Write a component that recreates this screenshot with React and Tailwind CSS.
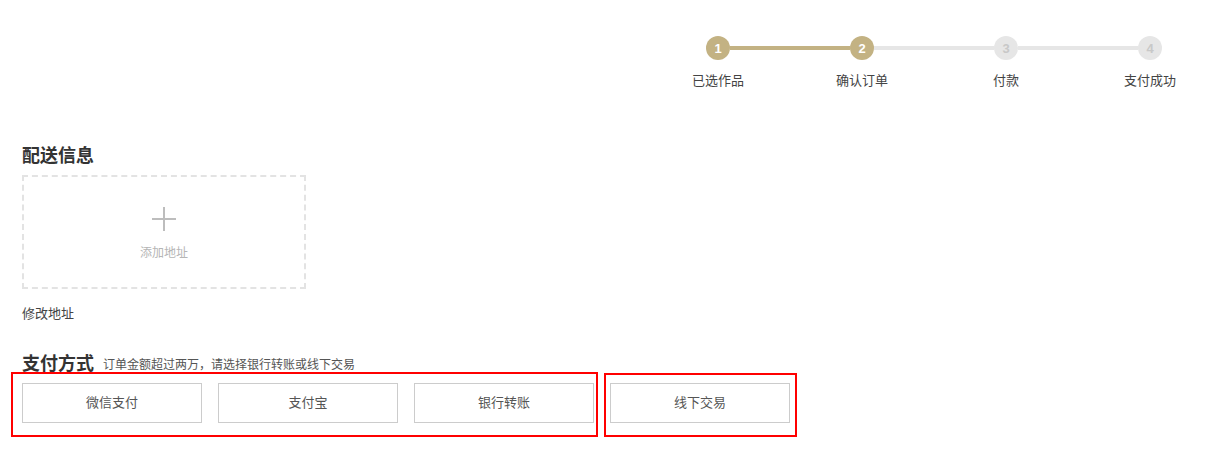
const STEPS = ['已选作品', '确认订单', '付款', '支付成功']
const CURRENT = 2

const PAY_MAIN = ['微信支付', '支付宝', '银行转账']

const Stepper = () => (
  <div className="ml-[646px] w-[576px] pt-9">
    {/* circles + connectors */}
    <div className="flex items-center px-[60px]">
      {STEPS.map((label, i) => {
        const done = i + 1 <= CURRENT
        return (
          <div key={label} className="flex items-center">
            {i > 0 && (
              <div className={`h-1 w-[120px] ${i + 1 <= CURRENT ? 'bg-[#c3b283]' : 'bg-[#e6e6e6]'}`} />
            )}
            <div
              className={`flex h-6 w-6 items-center justify-center rounded-full text-[13px] font-bold leading-none
                ${done ? 'bg-[#c3b283] text-white' : 'bg-[#e6e6e6] text-[#c8c8c8]'}`}
            >
              {i + 1}
            </div>
          </div>
        )
      })}
    </div>
    <div className="mt-[11px] grid grid-cols-4 text-center text-[13px] leading-5 text-[#444]">
      {STEPS.map((label) => (
        <div key={label}>{label}</div>
      ))}
    </div>
  </div>
)

const App = () => {
  return (
    <div className="h-[453px] w-[1225px] bg-white font-['Liberation_Sans','Noto_Sans_CJK_SC',sans-serif] text-[#333]">
      <Stepper />

      <div className="px-[22px]">
        {/* Delivery */}
        <h3 className="mt-[53px] text-[18px] font-bold leading-6 text-[#333]">配送信息</h3>
        <div className="mt-[7px] flex h-[114px] w-[284px] flex-col items-center border-2 border-dashed border-[#e3e3e3] pt-[30px]">
          <svg width="24" height="24" viewBox="0 0 24 24" className="text-[#bdbdbd]">
            <path d="M12 0v24M0 12h24" stroke="currentColor" strokeWidth="2" fill="none" />
          </svg>
          <div className="mt-[14px] text-[12px] leading-4 text-[#b5b5b5]">添加地址</div>
        </div>
        <div className="mt-[15px] text-[13px] leading-5 text-[#444]">修改地址</div>

        {/* Payment */}
        <div className="mt-[31px] flex h-[18px] items-end">
          <h3 className="text-[18px] font-bold leading-[18px] text-[#333]">支付方式</h3>
          <span className="ml-[9px] text-[12px] leading-4 text-[#555]">订单金额超过两万，请选择银行转账或线下交易</span>
        </div>
      </div>

      <div className="-mt-px flex items-start pl-[11px]">
        <div className="flex h-[65px] w-[587px] gap-4 border-2 border-[#ff0000] pl-[9px] pt-[9px]">
          {PAY_MAIN.map((m) => (
            <button
              key={m}
              className="flex h-10 w-[180px] items-center justify-center border border-[#cccccc] bg-white text-[13px] text-[#555]"
            >
              {m}
            </button>
          ))}
        </div>
        <div className="ml-[6px] mt-px h-[64px] w-[193px] border-2 border-[#ff0000] pl-1 pt-2">
          <button className="flex h-10 w-[180px] items-center justify-center border border-[#cccccc] bg-white text-[13px] text-[#555]">
            线下交易
          </button>
        </div>
      </div>
    </div>
  )
}

export default App
